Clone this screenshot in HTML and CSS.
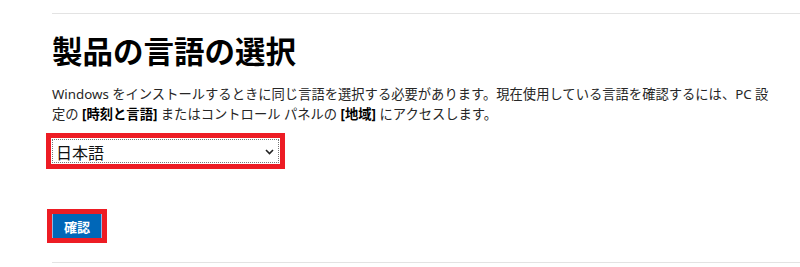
FILE: index.html
```html
<!DOCTYPE html>
<html lang="ja">
<head>
<meta charset="utf-8">
<title>製品の言語の選択</title>
<link rel="stylesheet" href="styles.css">
</head>
<body>
<main class="page">
  <hr class="rule">
  <h1 class="title">製品の言語の選択</h1>
  <p class="intro">Windows をインストールするときに同じ言語を選択する必要があります。現在使用している言語を確認するには、PC 設定の <b>[時刻と言語]</b> またはコントロール パネルの <b>[地域]</b> にアクセスします。</p>
  <div class="select-wrap">
    <select class="lang">
      <option>日本語</option>
    </select>
    <svg class="chevron" width="9" height="6" viewBox="0 0 9 6" aria-hidden="true"><path d="M1 1 L4.5 4.5 L8 1" fill="none" stroke="#222" stroke-width="1.6"/></svg>
  </div>
  <div class="actions">
    <button class="confirm" type="button">確認</button>
  </div>
  <hr class="rule">
</main>
</body>
</html>
```
FILE: styles.css
```css
html, body {
  margin: 0;
  padding: 0;
  background: #fff;
}
.page {
  padding: 13px 0 0 52px;
  font-family: "Noto Sans", "Noto Sans CJK JP", sans-serif;
  color: #262626;
}
.rule {
  margin: 0;
  border: 0;
  border-top: 1px solid #e3e3e3;
  height: 0;
}
.title {
  margin: 17px 0 0;
  font-size: 30.5px;
  line-height: 40px;
  font-weight: 700;
  color: #000;
}
.intro {
  margin: 13px 0 0;
  font-size: 13.3px;
  line-height: 20px;
  max-width: 724px;
}
.intro b {
  font-weight: 700;
  color: #000;
}
.select-wrap {
  position: relative;
  width: 227px;
  margin-top: 15px;
  outline: 5px solid #ed1c24;
  outline-offset: 1px;
}
.lang {
  display: block;
  width: 227px;
  height: 24px;
  margin: 0;
  padding: 0 0 0 3px;
  border: 1px dotted #777;
  border-radius: 0;
  background: #fff;
  font-family: "Noto Sans CJK JP", sans-serif;
  font-size: 16px;
  color: #111;
  appearance: none;
  -webkit-appearance: none;
}
.chevron {
  position: absolute;
  right: 5px;
  top: 10px;
  pointer-events: none;
}
.actions {
  margin-top: 51px;
  margin-bottom: 24px;
}
.confirm {
  display: block;
  width: 50px;
  height: 24px;
  margin: 0;
  padding: 0;
  border: 0;
  border-left: 1px solid #8ab8e6;
  border-right: 1px solid #8ab8e6;
  background: #0067b8;
  color: #fff;
  font-family: "Noto Sans CJK JP", sans-serif;
  font-size: 13px;
  font-weight: 700;
  outline: 5px solid #ed1c24;
  outline-offset: 0;
}
```
